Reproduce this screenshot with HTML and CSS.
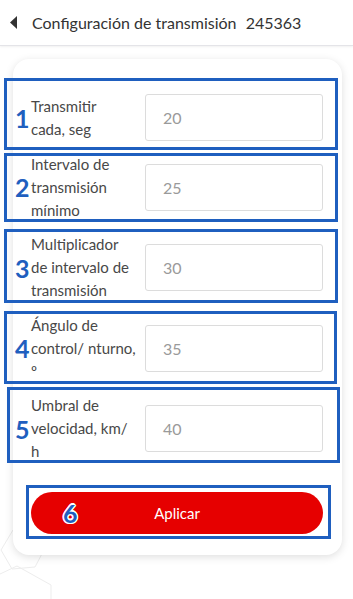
FILE: index.html
```html
<!DOCTYPE html>
<html lang="es">
<head>
    <meta charset="UTF-8">
    <meta name="viewport" content="width=device-width, initial-scale=1.0">
    <title>Configuración de transmisión</title>
    <link rel="stylesheet" href="styles.css">
</head>
<body>

    <header class="topbar">
        <svg class="back" width="8" height="13" viewBox="0 0 8 13"><path d="M7 0 L0 6.5 L7 13 Z" fill="#333"/></svg>
        <h1>Configuración de transmisión <span class="device">245363</span></h1>
    </header>

    <!-- fondo decorativo -->
    <svg class="hex" width="70" height="70" viewBox="0 0 70 70">
        <path d="M13 1 L1 21 L12 40 L35 38 L45 19 L35 3" fill="none" stroke="#ededed" stroke-width="1"/>
        <path d="M0 45 L17 37 L51 56 L51 70" fill="none" stroke="#ededed" stroke-width="1"/>
    </svg>

    <main class="card">
        <div class="row">
            <span class="mark mark-1"></span>
            <span class="num">1</span>
            <label>Transmitir<br>cada, seg</label>
            <div class="field">20</div>
        </div>
        <div class="row">
            <span class="mark mark-2"></span>
            <span class="num">2</span>
            <label>Intervalo de<br>transmisión<br>mínimo</label>
            <div class="field">25</div>
        </div>
        <div class="row">
            <span class="mark mark-3"></span>
            <span class="num">3</span>
            <label>Multiplicador<br>de intervalo de<br>transmisión</label>
            <div class="field">30</div>
        </div>
        <div class="row">
            <span class="mark mark-4"></span>
            <span class="num">4</span>
            <label>Ángulo de<br>control/ nturno,<br>º</label>
            <div class="field">35</div>
        </div>
        <div class="row">
            <span class="mark mark-5"></span>
            <span class="num">5</span>
            <label>Umbral de<br>velocidad, km/<br>h</label>
            <div class="field">40</div>
        </div>

        <div class="actions">
            <span class="mark mark-6"></span>
            <button class="apply">Aplicar</button>
            <span class="num num-btn">6</span>
        </div>
    </main>

</body>
</html>
```

FILE: styles.css
```css
html, body {
    margin: 0;
    height: 100%;
    background-color: #ffffff;
    font-family: 'Lato', 'Noto Sans', sans-serif;
    color: #444;
}

body {
    position: relative;
    overflow: hidden;
}

.topbar {
    height: 46px;
    display: flex;
    align-items: center;
    padding-left: 10px;
    border-bottom: 1px solid #e4e4e8;
    box-shadow: 0 1px 2px rgba(0, 0, 0, 0.06);
    box-sizing: border-box;
}

.topbar .back {
    margin-right: 14px;
}

.topbar h1 {
    margin: 0;
    font-size: 16px;
    font-weight: normal;
    color: #333;
}

.topbar .device {
    margin-left: 5px;
}

.hex {
    position: absolute;
    left: 0;
    top: 529px;
}

.card {
    position: relative;
    margin: 13px 11px 0 13px;
    padding: 35px 19px 21px 18px;
    background-color: #fff;
    border-radius: 16px;
    box-shadow: 0 2px 8px rgba(0, 0, 0, 0.13);
}

.row {
    position: relative;
    display: flex;
    align-items: center;
    margin-bottom: 11.5px;
}

.row label {
    width: 110px;
    margin-right: 4px;
    font-size: 15px;
    line-height: 23px;
    color: #484848;
    white-space: nowrap;
}

.field {
    flex: 1;
    height: 47px;
    box-sizing: border-box;
    border: 1px solid #dcdcdc;
    border-radius: 3px;
    padding-left: 17px;
    display: flex;
    align-items: center;
    font-size: 16px;
    color: #9a9a9a;
}

/* annotation boxes */
.mark {
    position: absolute;
    border: 3px solid #1f5fbf;
    pointer-events: none;
}

.mark-1 { left: -27px; right: -15px; top: -16px; bottom: -9px; }
.mark-2 { left: -27px; right: -15px; top: 0; bottom: 0; }
.mark-3 { left: -27px; right: -15px; top: -4px; bottom: -1px; }
.mark-4 { left: -27px; right: -14px; top: -3px; bottom: -1px; }
.mark-5 { left: -24px; right: -17px; top: -7px; bottom: 0; }
.mark-6 { left: -5px; right: -8px; top: -7px; bottom: -5px; }

.num {
    position: absolute;
    left: -16px;
    top: 50%;
    transform: translateY(-50%);
    font-size: 25px;
    font-weight: bold;
    color: #1f5fbf;
    line-height: 1;
    text-shadow: -1px -1px 0 #fff, 1px -1px 0 #fff, -1px 1px 0 #fff, 1px 1px 0 #fff,
                 0 -1.5px 0 #fff, 0 1.5px 0 #fff, -1.5px 0 0 #fff, 1.5px 0 0 #fff;
}

.actions {
    position: relative;
    margin-top: 29px;
}

.num-btn {
    left: 32px;
}

.apply {
    display: block;
    width: 100%;
    height: 42px;
    border: none;
    border-radius: 21px;
    background-color: #e60000;
    color: #fff;
    font-family: 'Lato', 'Noto Sans', sans-serif;
    font-size: 15px;
}
```
